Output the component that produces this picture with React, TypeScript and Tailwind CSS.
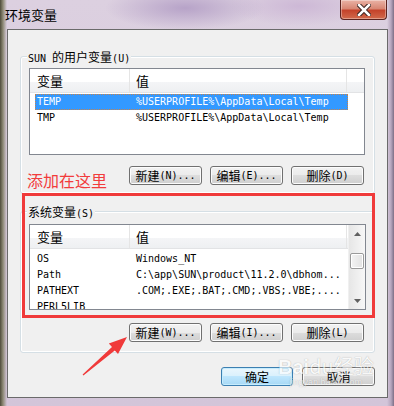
import React from "react";

const isCjk = (c: string) => /[\u3000-\u9fff\uff00-\uffef]/.test(c);

function Mixed({ text }: { text: string }) {
  const runs: { cjk: boolean; s: string }[] = [];
  for (const ch of text) {
    const c = isCjk(ch);
    const last = runs[runs.length - 1];
    if (last && last.cjk === c) last.s += ch;
    else runs.push({ cjk: c, s: ch });
  }
  return (
    <>
      {runs.map((r, i) =>
        r.cjk ? (
          <span key={i} className="font-['Noto_Sans_CJK_SC',sans-serif] text-[12px] whitespace-pre">
            {r.s}
          </span>
        ) : (
          <span key={i} className="font-['DejaVu_Sans_Mono',monospace] text-[10px] whitespace-pre">
            {r.s}
          </span>
        )
      )}
    </>
  );
}

function Btn({ label, primary }: { label: string; primary?: boolean }) {
  return (
    <div
      className={
        primary
          ? "w-[72px] h-[19px] rounded-[3px] border border-[#3c7fb1] bg-[linear-gradient(#eaf6fd_0%,#d9f0fc_50%,#bee6fd_50%,#a7d9f5_100%)] shadow-[inset_0_0_0_1px_#c6ecfd] flex items-center justify-center leading-none text-black"
          : "w-[73px] h-[19px] rounded-[3px] border border-[#707070] bg-[linear-gradient(#f2f2f2_0%,#ebebeb_50%,#dddddd_50%,#cfcfcf_100%)] shadow-[inset_0_0_0_1px_#fcfcfc] flex items-center justify-center leading-none text-black"
      }
    >
      <Mixed text={label} />
    </div>
  );
}

function Header() {
  return (
    <div className="h-[24px] flex shrink-0 border-b border-[#e2e3e5] bg-[linear-gradient(#ffffff_0%,#ffffff_55%,#f4f5f7_55%,#eef0f2_100%)] font-['Noto_Sans_CJK_SC',sans-serif] text-[13px] text-black">
      <div className="w-[99px] pl-[7px] flex items-center">变量</div>
      <div className="w-px bg-[#e5e5e5]" />
      <div className="w-[216px] pl-[6px] flex items-center">值</div>
      <div className="w-px bg-[#e5e5e5]" />
      <div className="flex-1" />
    </div>
  );
}

function Row({ name, value, selected }: { name: string; value: string; selected?: boolean }) {
  return (
    <div
      className={
        selected
          ? "ml-[5px] w-[313px] h-[16px] flex items-center bg-[#3399ff] text-white outline outline-1 -outline-offset-1 outline-dotted outline-[#c8824a] font-['DejaVu_Sans_Mono',monospace] text-[10px] leading-none whitespace-pre"
          : "ml-[5px] w-[313px] h-[16px] flex items-center text-black font-['DejaVu_Sans_Mono',monospace] text-[10px] leading-none whitespace-pre"
      }
    >
      <div className="w-[99px] pl-[2px]">{name}</div>
      <div className="pl-[2px]">{value}</div>
    </div>
  );
}

function Group({ label, children, pt, pb }: { label: string; children: React.ReactNode; pt: string; pb: string }) {
  return (
    <div className={`relative ml-[12px] w-[355px] rounded-[3px] border border-[#d5dfe5] shadow-[inset_0_0_0_1px_#ffffff] ${pt} ${pb}`}>
      <div className="absolute left-[6px] -top-[8px] px-[1px] bg-[#f0f0f0] leading-[14px] text-black">
        <Mixed text={label} />
      </div>
      {children}
    </div>
  );
}

export default function App() {
  return (
    <div className="relative w-[394px] h-[406px] overflow-hidden bg-[linear-gradient(to_right,#4e4b3a_0px,#8e8a76_3px,transparent_7px),linear-gradient(to_left,#7d6f86_0px,#b6a6be_3px,transparent_7px),radial-gradient(ellipse_80px_22px_at_185px_8px,#b7a3c8,transparent),radial-gradient(ellipse_70px_20px_at_300px_6px,#cdb8d6,transparent),linear-gradient(#dcd0e0,#d3c5d9)]">
      {/* title bar */}
      <div className="h-[29px] flex items-start">
        <div className="pl-[5px] pt-[6px] font-['Noto_Sans_CJK_SC',sans-serif] text-[13px] leading-[18px] text-black">
          环境变量
        </div>
        <div className="ml-auto mr-[7px] w-[47px] h-[20px] rounded-b-[4px] border border-t-0 border-[#5b2420] bg-[linear-gradient(#eab3a6_0%,#d88774_45%,#c4432b_55%,#d26a4c_100%)] shadow-[inset_0_0_0_1px_rgba(255,255,255,0.35)] flex items-center justify-center">
          <svg width="14" height="12" viewBox="0 0 14 12">
            <path d="M2 1 L12 11 M12 1 L2 11" stroke="#3a2522" strokeWidth="4.5" strokeLinecap="square" />
            <path d="M2 1 L12 11 M12 1 L2 11" stroke="#ffffff" strokeWidth="2.5" strokeLinecap="square" />
          </svg>
        </div>
      </div>

      {/* client area */}
      <div className="ml-[7px] w-[381px] h-[369px] border border-[#6a6a6a] bg-[#f0f0f0] flex flex-col">
        <div className="mt-[26px]">
          <Group label="SUN 的用户变量(U)" pt="pt-[11px]" pb="pb-[8px]">
            <div className="ml-[8px] w-[336px] h-[87px] border border-[#828790] bg-white flex flex-col overflow-hidden">
              <Header />
              <div className="pt-[1px] flex flex-col">
                <Row name="TEMP" value="%USERPROFILE%\AppData\Local\Temp" selected />
                <Row name="TMP" value="%USERPROFILE%\AppData\Local\Temp" />
              </div>
            </div>
            <div className="mt-[11px] pr-[10px] flex justify-end gap-[8px]">
              <Btn label="新建(N)..." />
              <Btn label="编辑(E)..." />
              <Btn label="删除(D)" />
            </div>
          </Group>
        </div>

        <div className="mt-[17px]">
          <Group label="系统变量(S)" pt="pt-[12px]" pb="pb-[10px]">
            <div className="ml-[8px] w-[337px] h-[86px] border border-[#828790] bg-white flex overflow-hidden">
              <div className="flex-1 flex flex-col">
                <Header />
                <div className="pt-[2px] flex flex-col">
                  <Row name="OS" value="Windows_NT" />
                  <Row name="Path" value="C:\app\SUN\product\11.2.0\dbhom..." />
                  <Row name="PATHEXT" value=".COM;.EXE;.BAT;.CMD;.VBS;.VBE;...." />
                  <Row name="PERL5LIB" value="" />
                </div>
              </div>
              <div className="w-[17px] flex flex-col bg-[linear-gradient(to_right,#e6e6e6,#f7f7f7)] border-l border-[#f0f0f0]">
                <div className="h-[17px] flex items-center justify-center">
                  <svg width="7" height="4" viewBox="0 0 7 4">
                    <path d="M0 4 L3.5 0 L7 4 Z" fill="#606060" />
                  </svg>
                </div>
                <div className="mt-[11px] mx-[1px] h-[16px] rounded-[2px] border border-[#9a9a9a] bg-[linear-gradient(to_right,#f3f3f3,#e2e2e2)] shadow-[inset_0_0_0_1px_#ffffff]" />
                <div className="flex-1" />
                <div className="h-[17px] flex items-center justify-center">
                  <svg width="7" height="4" viewBox="0 0 7 4">
                    <path d="M0 0 L7 0 L3.5 4 Z" fill="#606060" />
                  </svg>
                </div>
              </div>
            </div>
            <div className="mt-[13px] pr-[10px] flex justify-end gap-[8px]">
              <Btn label="新建(W)..." />
              <Btn label="编辑(I)..." />
              <Btn label="删除(L)" />
            </div>
          </Group>
        </div>

        <div className="mt-[14px] pr-[12px] flex justify-end gap-[9px]">
          <Btn label="确定" primary />
          <Btn label="取消" />
        </div>
      </div>

      {/* annotation overlays */}
      <div className="absolute left-[27px] top-[170px] font-['Noto_Sans_CJK_SC',sans-serif] text-[16px] leading-[20px] text-[#f23c3c]">
        添加在这里
      </div>
      <div className="absolute left-[22px] top-[193px] w-[353px] h-[125px] border-[3px] border-[#f03a3a]" />
      <svg className="absolute left-0 top-0 pointer-events-none" width="394" height="406" viewBox="0 0 394 406">
        <polygon
          points="127,337 118,354 114.8,350.4 83.4,375.6 82.6,374.4 112,347.1 108.8,343.5"
          fill="#f03a3a"
        />
      </svg>
      <div className="absolute left-[278px] top-[356px] flex flex-col items-center leading-none pointer-events-none opacity-60">
        <div className="font-['Liberation_Sans',sans-serif] text-[20px] font-bold text-white [text-shadow:0_0_1px_rgba(0,0,0,0.5)]">
          Bai<span className="font-['Noto_Sans_CJK_SC',sans-serif] font-normal">du经验</span>
        </div>
        <div className="mt-[1px] font-['Liberation_Sans',sans-serif] text-[9px] text-white [text-shadow:0_0_1px_rgba(0,0,0,0.5)]">
          jingyan.baidu.com
        </div>
      </div>
    </div>
  );
}
